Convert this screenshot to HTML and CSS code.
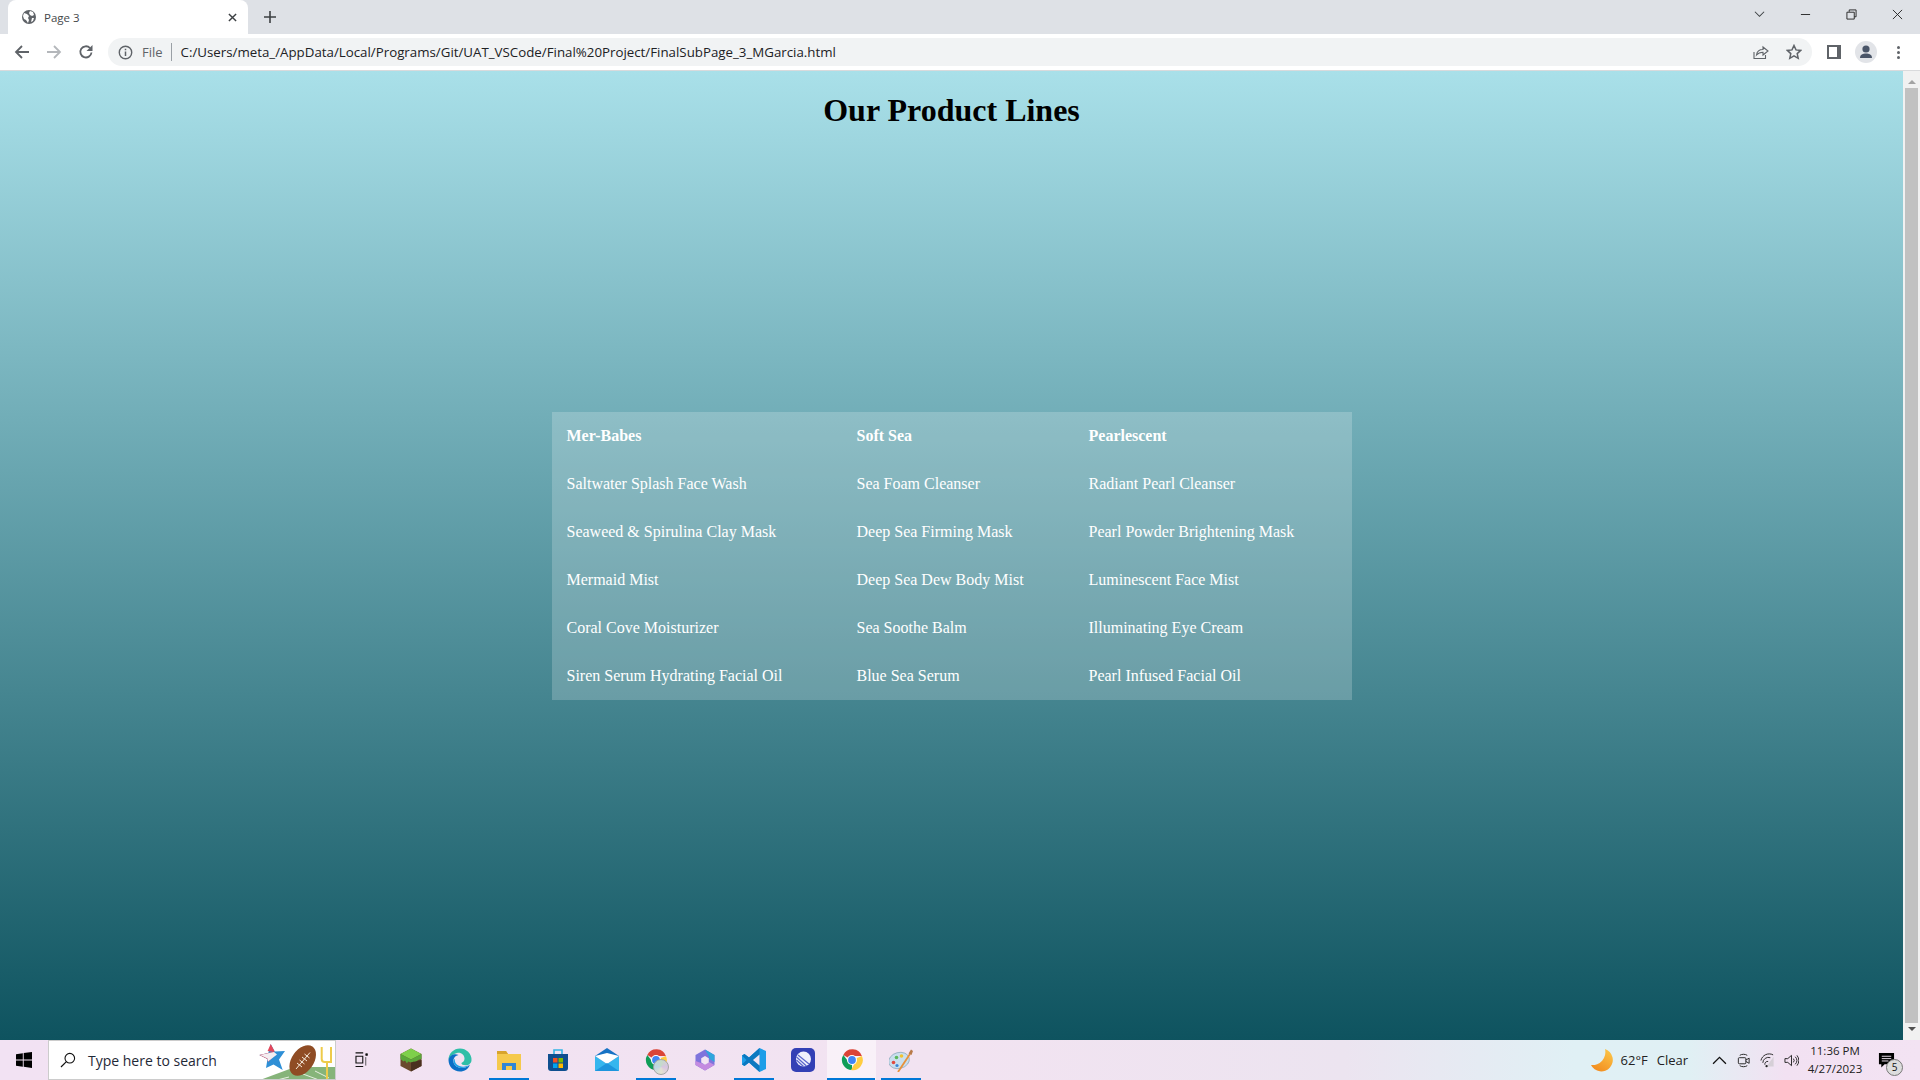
FILE: index.html
```html
<!DOCTYPE html>
<html>
<head>
  <meta charset="UTF-8">
  <title>Page 3</title>
  <link rel="stylesheet" href="styles.css">
</head>
<body>
  <svg class="defs" width="0" height="0">
    <symbol id="chrome" viewBox="0 0 24 24">
      <path d="M12 12 L3.300 7 A10 10 0 0 1 21.900 8 L12 8Z" fill="#db4437"/>
      <path d="M12 12 L12 22 A10 10 0 0 1 3.300 7 L8.600 14Z" fill="#0f9d58"/>
      <path d="M12 12 L21.900 8 A10 10 0 0 1 11 22 L15.400 14Z" fill="#ffcd40"/>
      <circle cx="12" cy="12" r="5" fill="#fff"/>
      <circle cx="12" cy="12" r="3.900" fill="#4285f4"/>
    </symbol>
  </svg>

  <div class="tabstrip">
    <div class="tab">
      <svg class="tab-icon" viewBox="0 0 16 16"><circle cx="8" cy="8" r="7" fill="#5f6368"/><path d="M3 4l3 1 2 2-1 2 1 2-1 3-2-3-2-1-1-3zM9 2l3 1 1 3-2 1-2-1-1-2zM11 9l2 0-1 3-2 1z" fill="#fff"/></svg>
      <span class="tab-title">Page 3</span>
      <svg class="tab-close" viewBox="0 0 10 10"><path d="M1 1l8 8M9 1l-8 8" stroke="#3c4043" stroke-width="1.600"/></svg>
    </div>
    <svg class="new-tab" viewBox="0 0 12 12"><path d="M6 0v12M0 6h12" stroke="#3c4043" stroke-width="1.600"/></svg>
    <div class="window-controls">
      <svg class="win-btn" viewBox="0 0 12 8"><path d="M1 1l5 5 5-5" fill="none" stroke="#3c4043" stroke-width="1.100"/></svg>
      <svg class="win-btn" viewBox="0 0 12 12"><path d="M1 6h10" stroke="#222" stroke-width="1"/></svg>
      <svg class="win-btn" viewBox="0 0 12 12"><path d="M3.500 3V1h7.500v7.500H9M1 3.500h8v7.500H1z" fill="none" stroke="#222" stroke-width="1"/></svg>
      <svg class="win-btn close" viewBox="0 0 12 12"><path d="M1 1l10 10M11 1L1 11" stroke="#222" stroke-width="1"/></svg>
    </div>
  </div>

  <div class="toolbar">
    <svg class="nav-icon" viewBox="0 0 16 16"><path d="M15 8H2M8 2L2 8l6 6" fill="none" stroke="#5f6368" stroke-width="1.800"/></svg>
    <svg class="nav-icon" viewBox="0 0 16 16"><path d="M1 8h13M8 2l6 6-6 6" fill="none" stroke="#b4b7bb" stroke-width="1.800"/></svg>
    <svg class="nav-icon" viewBox="0 0 16 16"><path d="M13.500 8.500A5.600 5.600 0 1 1 12 4" fill="none" stroke="#5f6368" stroke-width="1.800"/><path d="M14.500 1v6h-6z" fill="#5f6368"/></svg>
    <div class="omnibox">
      <svg class="info-icon" viewBox="0 0 14 14"><circle cx="7" cy="7" r="5.800" fill="none" stroke="#5f6368" stroke-width="1.300"/><path d="M7 6v4.200M7 3.600v1.400" stroke="#5f6368" stroke-width="1.400"/></svg>
      <span class="scheme">File</span>
      <span class="url">C:/Users/meta_/AppData/Local/Programs/Git/UAT_VSCode/Final%20Project/FinalSubPage_3_MGarcia.html</span>
      <svg class="omni-icon" viewBox="0 0 16 16"><path d="M1 8v6.500h11.500V11" fill="none" stroke="#5f6368" stroke-width="1.100"/><path d="M3.500 11c.5-3.500 3-5.500 6.500-5.500V3l5 4-5 4V8.200c-3 0-5 1-6.500 2.800z" fill="none" stroke="#5f6368" stroke-width="1.100"/></svg>
      <svg class="omni-icon" viewBox="0 0 16 16"><path d="M8 1.500l2 4.400 4.700.5-3.500 3.200 1 4.700L8 11.900l-4.200 2.400 1-4.700L1.300 6.400 6 5.900z" fill="none" stroke="#5f6368" stroke-width="1.500"/></svg>
    </div>
    <div class="side-panel"></div>
    <div class="avatar">
      <svg viewBox="0 0 22 22"><circle cx="11" cy="8" r="3.600" fill="#4a5568"/><path d="M5 17c0-3.500 3-4.500 6-4.500s6 1 6 4.500z" fill="#4a5568"/></svg>
    </div>
    <div class="menu-dots"><i></i><i></i><i></i></div>
  </div>

  <div class="viewport">
    <main class="page">
      <h1>Our Product Lines</h1>
      <table class="products">
        <colgroup>
          <col class="col-a">
          <col class="col-b">
          <col class="col-c">
        </colgroup>
        <tr>
          <th>Mer-Babes</th>
          <th>Soft Sea</th>
          <th>Pearlescent</th>
        </tr>
        <tr>
          <td>Saltwater Splash Face Wash</td>
          <td>Sea Foam Cleanser</td>
          <td>Radiant Pearl Cleanser</td>
        </tr>
        <tr>
          <td>Seaweed &amp; Spirulina Clay Mask</td>
          <td>Deep Sea Firming Mask</td>
          <td>Pearl Powder Brightening Mask</td>
        </tr>
        <tr>
          <td>Mermaid Mist</td>
          <td>Deep Sea Dew Body Mist</td>
          <td>Luminescent Face Mist</td>
        </tr>
        <tr>
          <td>Coral Cove Moisturizer</td>
          <td>Sea Soothe Balm</td>
          <td>Illuminating Eye Cream</td>
        </tr>
        <tr>
          <td>Siren Serum Hydrating Facial Oil</td>
          <td>Blue Sea Serum</td>
          <td>Pearl Infused Facial Oil</td>
        </tr>
      </table>
    </main>
    <div class="scrollbar">
      <span class="arrow arrow-up"></span>
      <span class="thumb"></span>
      <span class="arrow arrow-down"></span>
    </div>
  </div>

  <div class="taskbar">
    <div class="start">
      <svg viewBox="0 0 16 16"><path d="M0 2.200l6.800-1v6.300H0zM7.700 1.100L16 0v7.500H7.700zM0 8.400h6.800v6.400l-6.800-1zM7.700 8.400H16V16l-8.300-1.200z" fill="#000"/></svg>
    </div>
    <div class="search">
      <svg class="search-icon" viewBox="0 0 16 16"><circle cx="9.800" cy="6.200" r="4.800" fill="none" stroke="#111" stroke-width="1.100"/><path d="M6.400 9.600L1 15" stroke="#111" stroke-width="1.200"/></svg>
      <span class="search-text">Type here to search</span>
      <svg class="search-art" viewBox="0 0 80 40">
        <path d="M5 40L40 27h40v13z" fill="#86b47a"/>
        <path d="M22 40l12-3M48 34l16 6M60 31l14 7" stroke="#e6efe0" stroke-width="1"/>
        <path d="M15.700 4l4 7.500L30 11l-6 8.500 3.700 10.500-9.200-5.500L11 28l1.500-9L4.300 15l9-2z" fill="#2e8fd6"/>
        <path d="M15.700 4l4 7.500-6.400 1.500-9 2 8.200 4 .5 3 4-4 2-6-6.400-1z" fill="#e4475a"/>
        <path d="M5 15l14-3 3 2.500-9 7-.5-3z" fill="#f3eef2"/>
        <ellipse cx="47.700" cy="20.500" rx="11" ry="17" transform="rotate(35 47.700 20.500)" fill="#8f4c24"/>
        <path d="M41 29L55 12.500M44.500 20l5 4M47 17l5 4M49.500 14l5 4M42 23l5 4" stroke="#f5eadc" stroke-width="1"/>
        <path d="M66.700 7v12q0 3 3 3h6.300V7M72 22v18" fill="none" stroke="#eecb4a" stroke-width="2"/>
      </svg>
    </div>
    <div class="task-item">
      <svg class="task-icon" viewBox="0 0 20 20"><path d="M3 1h9M3 17h9M3.500 5h8v8h-8z" fill="none" stroke="#111" stroke-width="1.300"/><path d="M15 2h2v2h-2zM15 6v10" fill="#111" stroke="#111" stroke-width=".8"/></svg>
    </div>
    <div class="task-item">
      <svg class="app-icon" viewBox="0 0 24 24"><path d="M12 0.500l10.500 5.500v12L12 23.500 1.500 18V6z" fill="#6b4a2e"/><path d="M12 .5l10.500 5.500L12 11.500 1.500 6z" fill="#7ed04b"/><path d="M1.500 6L12 11.500v3l-3-1-1 2-2-3-1.500 1-3-2.500zM22.500 6L12 11.500v3l3-1 1 1.500 3-3 3.500-1z" fill="#5aa83a"/><path d="M12 14.500v9l10.500-5.500v-6z" fill="#4a3120"/></svg>
    </div>
    <div class="task-item">
      <svg class="app-icon" viewBox="0 0 24 24"><path d="M.5 12A11.500 11.500 0 0 1 23.500 12c0 3.200-2.500 5.300-5.800 5.300-2.700 0-4.300-1-4.300-2.300 1.600-.5 3.100-2 3.100-4.400C16.500 7 13 4 9 5 5 6 1.700 9 .5 12z" fill="#2fbfa8"/><path d="M.5 12C1.700 6.500 7 5 10.500 7 6.500 8 5 11 5.500 14c1 5 6.500 7 11.500 5.500 2-.6 4-1.600 5-3C20.500 21 16.500 23.500 12 23.500 5.500 23.500.5 18.500.5 12z" fill="#0c6fc6"/><path d="M5.500 14c1 5 6.500 7 11.500 5.500 2-.6 4-1.600 5-3-3 2-7 2.800-10.500 1.500C8.500 17 6.500 15 6.800 10.800 5.700 11.500 5.300 12.800 5.500 14z" fill="#1ea2e4"/></svg>
    </div>
    <div class="task-item running">
      <svg class="app-icon" viewBox="0 0 24 24"><path d="M0 3h9l2 3h13v16H0z" fill="#f5c94c"/><path d="M0 3h9l2 3H0z" fill="#d8a42c"/><path d="M5 22v-7h14v7h-4v-4H9v4z" fill="#2f86d6"/></svg>
    </div>
    <div class="task-item">
      <svg class="app-icon" viewBox="0 0 24 24"><path d="M2 6h20v14a3 3 0 0 1-3 3H5a3 3 0 0 1-3-3z" fill="#0f4f8f"/><path d="M8 6V2h8v4" fill="none" stroke="#35b5e5" stroke-width="1.600"/><rect x="7" y="10" width="4.500" height="4.500" fill="#f25022"/><rect x="12.500" y="10" width="4.500" height="4.500" fill="#7fba00"/><rect x="7" y="15.500" width="4.500" height="4.500" fill="#00a4ef"/><rect x="12.500" y="15.500" width="4.500" height="4.500" fill="#ffb900"/></svg>
    </div>
    <div class="task-item">
      <svg class="app-icon" viewBox="0 0 24 24"><path d="M0 8L12 0l12 8v15H0z" fill="#1672c4"/><path d="M0 8l12 8 12-8v15H0z" fill="#35b6ee"/><path d="M0 8l12-3 12 3-12 8z" fill="#fff"/><path d="M0 23l12-8 12 8z" fill="#1d95dd"/></svg>
    </div>
    <div class="task-item running">
      <svg class="app-icon" viewBox="0 0 24 24"><use href="#chrome"/></svg>
      <span class="profile-badge"></span>
    </div>
    <div class="task-item">
      <svg class="app-icon" viewBox="0 0 24 24"><path d="M12 1.500l9.500 5.500v10L12 22.500 2.500 17V7z" fill="#7f74dc"/><path d="M12 1.500l9.500 5.500v7l-5.500-3.500V8.500z" fill="#2fa6dc"/><path d="M2.500 13v4L12 22.500l9.500-5.500-5.500-3L12 16.500z" fill="#c48be0"/><path d="M12 8l3.800 2.200v4.300L12 16.700l-3.800-2.200v-4.300z" fill="#f2e4f2"/></svg>
    </div>
    <div class="task-item running">
      <svg class="app-icon" viewBox="0 0 24 24"><path d="M17.500 0L24 3v18l-6.500 3L7 14.500 2.500 18 0 16.500V7.500L2.500 6 7 9.500z" fill="#1e9ee8"/><path d="M17.500 0v24L7 14.500 2.500 18 0 16.500 4.500 12 0 7.500 2.500 6 7 9.500z" fill="#0c78c0"/><path d="M17.500 6.500L11 12l6.500 5.500z" fill="#f2e4f2"/></svg>
    </div>
    <div class="task-item">
      <svg class="app-icon" viewBox="0 0 24 24"><rect width="24" height="24" rx="5" fill="#3340b5"/><circle cx="12.500" cy="11" r="7.500" fill="#eef0fb"/><path d="M5.500 9l10 9M5.500 12l7 6.500M7 7l11 9" stroke="#5a66cc" stroke-width="1.200"/></svg>
    </div>
    <div class="task-item running active">
      <svg class="app-icon" viewBox="0 0 24 24"><use href="#chrome"/></svg>
    </div>
    <div class="task-item running">
      <svg class="app-icon" viewBox="0 0 24 24"><ellipse cx="10" cy="12.500" rx="10.500" ry="8" transform="rotate(-15 10 12.500)" fill="#c9dfee" stroke="#7a9ab0" stroke-width=".6"/><circle cx="4.500" cy="14.500" r="1.800" fill="#e04a3f"/><circle cx="7.500" cy="9.500" r="1.800" fill="#5cb85c"/><circle cx="12.500" cy="8" r="1.800" fill="#f2c230"/><circle cx="8" cy="17.500" r="1.600" fill="#3a86d8"/><path d="M9 24L21 6" stroke="#e8913a" stroke-width="1.800"/><path d="M19.500 5.500L22 1.500 24 3l-1.500 4z" fill="#b87a4a"/></svg>
    </div>

    <div class="tray">
      <svg class="moon" viewBox="0 0 24 24"><defs><linearGradient id="moonfill" x1="0.800" y1="0" x2="0.200" y2="1"><stop offset="0" stop-color="#fbc548"/><stop offset="1" stop-color="#f28a1e"/></linearGradient></defs><path d="M15 1A11.500 11.500 0 1 1 1 17 13 13 0 0 0 15 1z" fill="url(#moonfill)"/></svg>
      <span class="weather temp">62°F</span>
      <span class="weather cond">Clear</span>
      <svg class="tray-icon chev" viewBox="0 0 14 14"><path d="M1 10l6-6 6 6" fill="none" stroke="#111" stroke-width="1.200"/></svg>
      <svg class="tray-icon" viewBox="0 0 16 16"><path d="M4 2.500C6 1 10 1 12 2.500M4 13.500c2 1.500 6 1.500 8 0" fill="none" stroke="#222"/><rect x="2.500" y="5" width="8" height="6.500" rx="1" fill="none" stroke="#222"/><path d="M10.500 7.500L14 5.500v5.500l-3.500-2" fill="none" stroke="#222"/></svg>
      <svg class="tray-icon" viewBox="0 0 16 16"><path d="M1 8a9 9 0 0 1 13-6M3 10.500a6 6 0 0 1 8-5.500M5.200 12.500a3 3 0 0 1 3.500-3.500" fill="none" stroke="#222"/><path d="M14.500 4L7 14.500h7.500z" fill="#bbb" opacity=".5"/><circle cx="7" cy="14" r="1.200" fill="#222"/></svg>
      <svg class="tray-icon" viewBox="0 0 16 16"><path d="M1 6h3l4-3.500v11L4 10H1z" fill="none" stroke="#222"/><path d="M10 6a3 3 0 0 1 0 4M12 4a6 6 0 0 1 0 8M13.800 2.500a8.500 8.500 0 0 1 0 11" fill="none" stroke="#222"/></svg>
      <div class="clock">
        <span>11:36 PM</span>
        <span>4/27/2023</span>
      </div>
      <div class="notify">
        <svg viewBox="0 0 18 18"><path d="M1 1h16v12H7l-3.500 3.500V13H1z" fill="#000"/><path d="M4 4.500h10M4 7h10M4 9.500h7" stroke="#f2e4f2"/></svg>
        <span class="notify-count">5</span>
      </div>
    </div>
  </div>
</body>
</html>
```

FILE: styles.css
```css
html, body {
  height: 100%;
  margin: 0;
}
body {
  display: flex;
  flex-direction: column;
  overflow: hidden;
  font-family: "Open Sans", "Noto Sans", sans-serif;
  color: #202124;
}
.defs {
  position: absolute;
}

/* browser chrome */
.tabstrip {
  flex: 0 0 34px;
  display: flex;
  align-items: flex-end;
  padding-left: 8px;
  background: #dee1e6;
}
.tab {
  width: 240px;
  height: 34px;
  display: flex;
  align-items: center;
  box-sizing: border-box;
  padding: 0 11px 0 13px;
  background: #fff;
  border-radius: 8px 8px 0 0;
}
.tab-icon {
  width: 16px;
  height: 16px;
  margin-right: 7px;
}
.tab-title {
  flex: 1;
  font-size: 11.5px;
  color: #45474a;
}
.tab-close {
  width: 9px;
  height: 9px;
}
.new-tab {
  width: 12px;
  height: 12px;
  margin: 0 0 11px 16px;
}
.window-controls {
  margin-left: auto;
  align-self: stretch;
  display: flex;
  align-items: center;
  padding-bottom: 6px;
}
.win-btn {
  width: 11px;
  height: 11px;
  margin-right: 35px;
}
.win-btn.close {
  margin-right: 17px;
}

.toolbar {
  flex: 0 0 36px;
  display: flex;
  align-items: center;
  padding-left: 14px;
  background: #fff;
  border-bottom: 1px solid #d9dadc;
}
.nav-icon {
  width: 16px;
  height: 16px;
  margin-right: 16px;
}
.omnibox {
  flex: 0 0 1704px;
  height: 28px;
  margin-left: -2px;
  display: flex;
  align-items: center;
  box-sizing: border-box;
  padding: 0 10px 0 10px;
  border-radius: 14px;
  background: #f1f3f4;
  font-size: 13px;
}
.info-icon {
  width: 15px;
  height: 15px;
  margin-right: 9px;
}
.scheme {
  padding-right: 8px;
  border-right: 1px solid #9aa0a6;
  color: #5f6368;
}
.url {
  flex: 1;
  padding-left: 9px;
  font-size: 13.3px;
  color: #202124;
}
.omni-icon {
  width: 16px;
  height: 16px;
  margin-left: 17px;
}
.side-panel {
  flex: none;
  width: 14px;
  height: 14px;
  margin-left: 15px;
  box-sizing: border-box;
  border: 2px solid #5f6368;
  border-right-width: 4px;
}
.avatar {
  flex: none;
  width: 22px;
  height: 22px;
  margin-left: 14px;
  border-radius: 50%;
  background: #e2e4e8;
}
.avatar svg {
  display: block;
}
.menu-dots {
  margin-left: 20px;
  display: flex;
  flex-direction: column;
  gap: 2px;
}
.menu-dots i {
  width: 3px;
  height: 3px;
  border-radius: 50%;
  background: #5f6368;
}

/* page area */
.viewport {
  flex: 1;
  min-height: 0;
  display: flex;
}
.page {
  flex: 1;
  background: linear-gradient(#a9e0e9, #0e535f);
  color: #000;
  font-family: "Liberation Serif", serif;
}
.page h1 {
  margin: 21px 0 0;
  text-align: center;
  font-size: 32px;
}
.products {
  width: 800px;
  margin: 283px auto 0;
  border-collapse: collapse;
  table-layout: fixed;
  background: rgba(255, 255, 255, 0.2);
  color: #fff;
  font-size: 16px;
}
.col-a {
  width: 290px;
}
.col-b {
  width: 232px;
}
.col-c {
  width: 278px;
}
.products th,
.products td {
  height: 48px;
  box-sizing: border-box;
  padding: 15px;
  text-align: left;
  white-space: nowrap;
}
.scrollbar {
  flex: 0 0 17px;
  display: flex;
  flex-direction: column;
  align-items: center;
  background: #f1f1f1;
}
.arrow {
  width: 0;
  box-sizing: border-box;
  height: 13px;
  flex: 0 0 13px;
}
.arrow-up {
  border: 4px solid transparent;
  border-top-width: 5px;
  border-bottom: 4px solid #a3a3a3;
}
.arrow-down {
  border: 4px solid transparent;
  border-top: 4px solid #505050;
  border-bottom-width: 5px;
}
.thumb {
  flex: 1;
  width: 13px;
  margin: 4px 0 4px;
  background: #c1c1c1;
}

/* windows taskbar */
.taskbar {
  flex: 0 0 40px;
  display: flex;
  align-items: stretch;
  background: linear-gradient(90deg, #f2e2f3 0, #f2e3f1 50%, #ece4f0 70%, #e0f0f5 82%, #e0f0f4 88%, #f2e1f2 93%, #f3e3f3 100%);
}
.start {
  width: 48px;
  display: flex;
  align-items: center;
  justify-content: center;
}
.start svg {
  width: 16px;
  height: 16px;
}
.search {
  width: 288px;
  display: flex;
  align-items: center;
  box-sizing: border-box;
  padding-left: 11px;
  position: relative;
  overflow: hidden;
  background: #fff;
  border: 1px solid #ccc;
  margin-right: 1px;
}
.search-icon {
  width: 16px;
  height: 16px;
}
.search-text {
  margin-left: 12px;
  font-size: 14px;
  color: #1f2937;
}
.search-art {
  position: absolute;
  right: 0;
  top: -1px;
  width: 80px;
  height: 40px;
}
.task-item {
  width: 49px;
  box-sizing: border-box;
  display: flex;
  align-items: center;
  justify-content: center;
  position: relative;
}
.task-item.running::after {
  content: "";
  position: absolute;
  left: 5px;
  right: 4px;
  bottom: 0;
  height: 2px;
  background: #0078d7;
}
.task-item.active {
  background: rgba(255, 255, 255, 0.5);
}
.task-item.active::after {
  left: 0;
  right: 1px;
}
.task-icon {
  width: 17px;
  height: 17px;
}
.app-icon {
  width: 24px;
  height: 24px;
}
.profile-badge {
  position: absolute;
  left: 22px;
  top: 19px;
  width: 16px;
  height: 16px;
  box-sizing: border-box;
  border-radius: 50%;
  background: conic-gradient(#c4dcc8, #d8c4e2, #e4e2d0, #bcd6e4, #c4dcc8);
  border: 1px solid #a5a5a5;
}
.tray {
  margin-left: auto;
  padding-right: 13px;
  display: flex;
  align-items: center;
}
.moon {
  width: 24px;
  height: 24px;
  margin-right: 7px;
}
.weather {
  font-size: 13px;
  color: #222;
}
.cond {
  margin-left: 9px;
}
.tray-icon {
  width: 15px;
  height: 15px;
  margin-left: 9px;
}
.tray-icon.chev {
  margin-left: 24px;
}
.clock {
  width: 62px;
  margin-left: 5px;
  display: flex;
  flex-direction: column;
  align-items: center;
  gap: 2px;
  font-size: 11.5px;
  line-height: 16px;
  color: #222;
}
.notify {
  width: 41px;
  height: 100%;
  display: flex;
  align-items: center;
  justify-content: center;
  position: relative;
}
.notify svg {
  width: 17px;
  height: 17px;
}
.notify-count {
  position: absolute;
  left: 20px;
  top: 19px;
  width: 15px;
  height: 15px;
  border-radius: 50%;
  border: 1px solid #777;
  background: #ddd;
  font-size: 10px;
  line-height: 15px;
  text-align: center;
  color: #111;
}
```
